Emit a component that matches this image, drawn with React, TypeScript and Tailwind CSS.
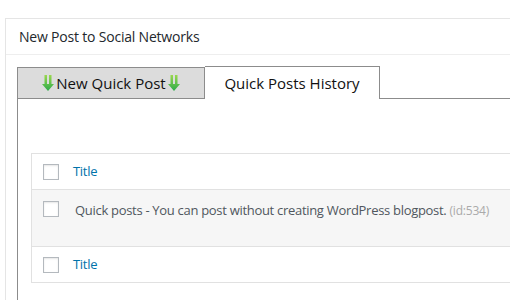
const FONT = "font-['Open_Sans','Noto_Sans',sans-serif]"

function Checkbox() {
  return <span className="block w-4 h-4 border border-[#b4b9be] bg-white shadow-[inset_0_1px_2px_rgba(0,0,0,0.1)] shrink-0" />
}

function Arrow({ id }: { id: string }) {
  return (
    <svg width="12" height="16" viewBox="0 0 12 16" className="shrink-0">
      <defs>
        <linearGradient id={id} x1="0" y1="0" x2="0" y2="1">
          <stop offset="0" stopColor="#9ad84e" />
          <stop offset="1" stopColor="#2daa4b" />
        </linearGradient>
      </defs>
      <path d="M2.5 0h2.5v9h2V0h2.5v9H12L6 16 0 9h2.5z" fill={`url(#${id})`} />
    </svg>
  )
}

export default function App() {
  return (
    <div className={`w-[510px] h-[300px] overflow-hidden bg-white ${FONT}`}>
      <div className="pt-[18px] pl-[5px]">
        <div className="w-[700px] border border-[#e5e5e5] bg-white">
          <div className="h-[36px] px-[13px] flex items-center border-b border-[#eeeeee] text-[14px] tracking-[-0.2px] text-[#23282d]">
            New Post to Social Networks
          </div>
          <div className="pl-[11px] pt-[11px]">
            {/* tabs */}
            <div className="flex items-end">
              <div className="w-[188px] h-[32px] border border-[#8c8c8c] bg-[#dcdcdc] flex items-center justify-center gap-[2px] text-[15px] text-[#111]">
                <Arrow id="a1" />
                <span>New Quick Post</span>
                <Arrow id="a2" />
              </div>
              <div className="w-[175px] h-[33px] border-t border-r border-[#8c8c8c] flex items-center justify-center text-[15px] text-[#111]">
                Quick Posts History
              </div>
              <div className="flex-1 border-b border-[#8c8c8c]" />
            </div>
            {/* panel */}
            <div className="border-l border-[#8c8c8c] pl-[13px] pt-[54px] pb-[20px]">
              <div className="border border-[#e1e1e1] text-[13px] tracking-[-0.3px]">
                <div className="h-[36px] flex items-center border-b border-[#e1e1e1] pl-[11px]">
                  <Checkbox />
                  <span className="ml-[14px] text-[#0073aa]">Title</span>
                </div>
                <div className="h-[57px] bg-[#f6f6f6] border-b border-[#e1e1e1] pl-[11px] pt-[11px] flex items-start">
                  <Checkbox />
                  <span className="ml-[16px] text-[#50575e]">
                    Quick posts - You can post without creating WordPress blogpost.{' '}
                    <span className="text-[#aaaaaa] text-[12px] tracking-[-0.2px]">(id:534)</span>
                  </span>
                </div>
                <div className="h-[35px] flex items-center pl-[11px]">
                  <Checkbox />
                  <span className="ml-[14px] text-[#0073aa]">Title</span>
                </div>
              </div>
            </div>
          </div>
        </div>
      </div>
    </div>
  )
}
